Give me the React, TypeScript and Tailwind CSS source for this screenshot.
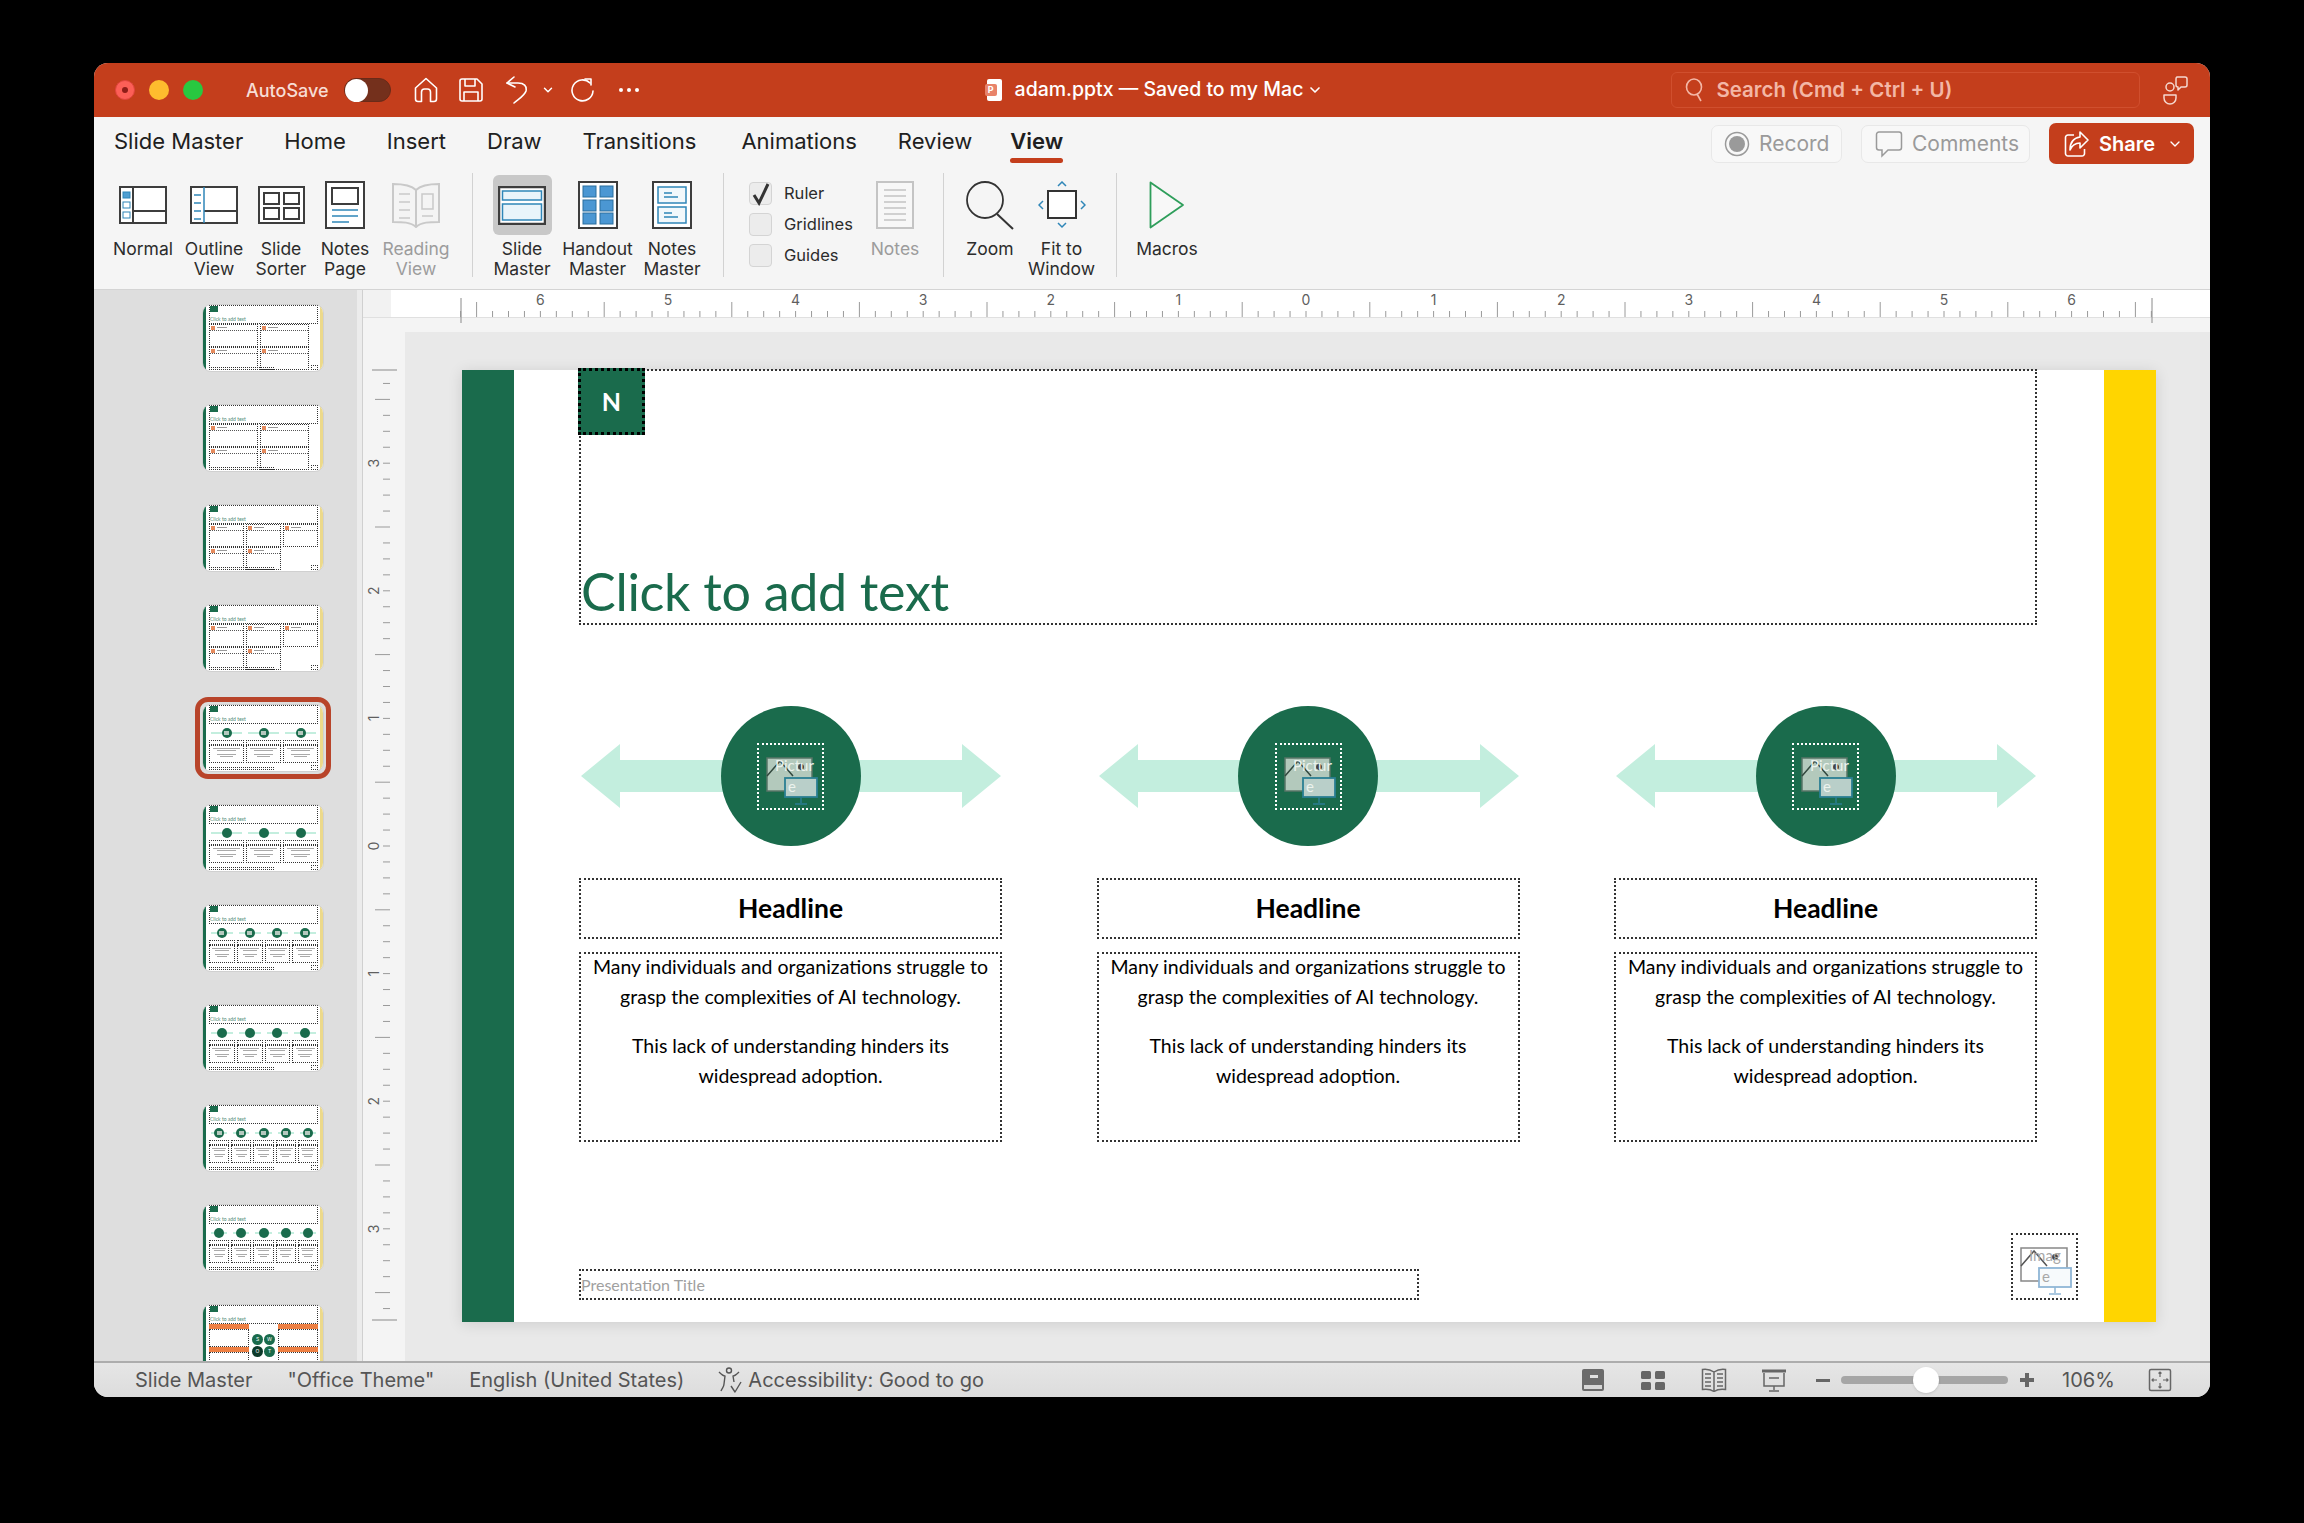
import React from 'react';
import { ChevronDown } from 'lucide-react';

const GREEN = '#1a6b4c';
const ui = "font-['Inter','Liberation_Sans',sans-serif]";
const deck = "font-['Lato','Open_Sans',sans-serif]";

function HomeIcon() {
  return (
    <svg width="24" height="26" viewBox="0 0 24 26" fill="none" stroke="#fff" strokeWidth="1.6" strokeLinejoin="round">
      <path d="M1.5 11 12 1.5 22.5 11v11a2.5 2.5 0 0 1-2.5 2.5h-3.5V15a3 3 0 0 0-3-3h-3a3 3 0 0 0-3 3v9.500H4A2.500 2.500 0 0 1 1.500 22z" />
    </svg>
  );
}

function SaveIcon() {
  return (
    <svg width="24" height="24" viewBox="0 0 24 24" fill="none" stroke="#fff" strokeWidth="1.6" strokeLinejoin="round">
      <path d="M3 1h15l5 5v15a2 2 0 0 1-2 2H3a2 2 0 0 1-2-2V3a2 2 0 0 1 2-2z" />
      <path d="M6 1v7h10V1M5 23v-9h14v9" />
    </svg>
  );
}

function UndoIcon() {
  return (
    <svg width="24" height="28" viewBox="0 0 24 28" fill="none" stroke="#fff" strokeWidth="1.6" strokeLinecap="round" strokeLinejoin="round">
      <path d="M9 1 2 7l8 4" />
      <path d="M2 7h11c6 0 9 3 8 8-1 4-6 7-12 12" />
    </svg>
  );
}

function RedoIcon() {
  return (
    <svg width="24" height="24" viewBox="0 0 24 24" fill="none" stroke="#fff" strokeWidth="1.6" strokeLinecap="round" strokeLinejoin="round">
      <path d="M19 5A10.500 10.500 0 1 0 22 13" />
      <path d="M14 1h6v6" />
    </svg>
  );
}

function CollabIcon() {
  return (
    <svg width="26" height="30" viewBox="0 0 26 30" fill="none" stroke="#f5d8cf" strokeWidth="1.5" strokeLinejoin="round">
      <path d="M15 2h8a2 2 0 0 1 2 2v6a2 2 0 0 1-2 2h-4l-3 3v-3a2 2 0 0 1-2-2V4a2 2 0 0 1 1-2z" />
      <circle cx="8" cy="12" r="4" />
      <path d="M2 20h12v3a6 6 0 0 1-12 0z" />
    </svg>
  );
}

function IconBtn({ w, label, disabled, icon }: { w: string; label: string[]; disabled?: boolean; icon: React.ReactNode }) {
  return (
    <div className={`${w} flex flex-col items-center`}>
      <div className="h-[61px] pt-[3px] w-full flex items-center justify-center">{icon}</div>
      <div className={`mt-[5px] text-center text-[17.5px] leading-[20px] whitespace-nowrap ${disabled ? 'text-[#9c9c9c]' : 'text-[#2c2c2c]'}`}>
        {label.map((l) => (
          <div key={l}>{l}</div>
        ))}
      </div>
    </div>
  );
}

const dark = '#3d3d3d';
const blue = '#2f86b8';

function NormalIcon() {
  return (
    <svg width="48" height="38" viewBox="0 0 48 38" fill="none">
      <rect x="1" y="1" width="46" height="36" fill="#fff" stroke={dark} strokeWidth="2" />
      <path d="M14 1v36M14 25h33" stroke={dark} strokeWidth="2" />
      <rect x="4" y="6" width="7" height="6" fill="#4f9fd2" stroke={blue} />
      <rect x="4" y="16" width="7" height="6" fill="#fff" stroke={blue} />
      <rect x="4" y="26" width="7" height="6" fill="#fff" stroke={blue} />
    </svg>
  );
}

function OutlineIcon() {
  return (
    <svg width="48" height="38" viewBox="0 0 48 38" fill="none">
      <rect x="1" y="1" width="46" height="36" fill="#fff" stroke={dark} strokeWidth="2" />
      <path d="M14 25h33" stroke={dark} strokeWidth="2" />
      <path d="M14 1v36" stroke={blue} strokeWidth="1.500" />
      <path d="M4 9h7M4 17h7M4 25h7M4 33h7" stroke={blue} strokeWidth="1.500" />
    </svg>
  );
}

function SorterIcon() {
  return (
    <svg width="47" height="38" viewBox="0 0 47 38" fill="none" stroke={dark} strokeWidth="2">
      <rect x="1" y="1" width="45" height="36" fill="#fff" />
      <rect x="6" y="7" width="15" height="11" />
      <rect x="26" y="7" width="15" height="11" />
      <rect x="6" y="22" width="15" height="11" />
      <rect x="26" y="22" width="15" height="11" />
    </svg>
  );
}

function NotesPageIcon() {
  return (
    <svg width="40" height="48" viewBox="0 0 40 48" fill="none">
      <rect x="1" y="1" width="38" height="46" fill="#fff" stroke={dark} strokeWidth="2" />
      <rect x="7" y="7" width="26" height="16" stroke={dark} strokeWidth="2" />
      <path d="M7 29h26M7 35h26M7 41h17" stroke={blue} strokeWidth="1.500" />
    </svg>
  );
}

function ReadingIcon() {
  return (
    <svg width="50" height="46" viewBox="0 0 50 46" fill="none" stroke="#c9c9c9" strokeWidth="2">
      <path d="M25 8C20 3 10 2 2 2v38c9 0 18 0 23 5 5-5 14-5 23-5V2c-8 0-18 1-23 6z" fill="#f4f4f4" />
      <path d="M25 8v36" />
      <path d="M8 12h11M8 20h11M8 28h11M8 36h11M31 34h11" strokeWidth="1.500" />
      <rect x="31" y="12" width="11" height="15" strokeWidth="1.500" />
    </svg>
  );
}

function MasterIcon() {
  return (
    <svg width="48" height="39" viewBox="0 0 48 39" fill="none">
      <rect x="1" y="1" width="46" height="37" fill="#fff" stroke={dark} strokeWidth="2.500" />
      <rect x="4.500" y="5" width="39" height="9" fill="#e9f4fa" stroke={blue} strokeWidth="1.500" />
      <rect x="4.500" y="18" width="39" height="16" fill="#e9f4fa" stroke={blue} strokeWidth="1.500" />
    </svg>
  );
}

function HandoutIcon() {
  const cells = [5, 19, 32];
  return (
    <svg width="40" height="48" viewBox="0 0 40 48" fill="none">
      <rect x="1" y="1" width="38" height="46" fill="#fff" stroke={dark} strokeWidth="2" />
      {cells.map((y) => (
        <g key={y} fill="#4b97d3" stroke="#2b6e9e">
          <rect x="5" y={y} width="13" height="11" />
          <rect x="22" y={y} width="13" height="11" />
        </g>
      ))}
    </svg>
  );
}

function NotesMasterIcon() {
  return (
    <svg width="40" height="48" viewBox="0 0 40 48" fill="none">
      <rect x="1" y="1" width="38" height="46" fill="#fff" stroke={dark} strokeWidth="2" />
      <rect x="6" y="6" width="28" height="16" fill="#f2f8fb" stroke={blue} strokeWidth="1.500" />
      <rect x="6" y="26" width="28" height="16" fill="#f2f8fb" stroke={blue} strokeWidth="1.500" />
      <path d="M12 12h8M12 16h14M12 32h8M12 36h14" stroke={blue} strokeWidth="1.500" />
    </svg>
  );
}

function NotesIcon() {
  return (
    <svg width="38" height="48" viewBox="0 0 38 48" fill="none">
      <rect x="1" y="1" width="36" height="46" fill="#f7f7f7" stroke="#c4c4c4" strokeWidth="2" />
      <path d="M8 9h22M8 15h22M8 21h22M8 27h22M8 33h22M8 39h22" stroke="#c4c4c4" strokeWidth="1.500" />
    </svg>
  );
}

function ZoomIcon() {
  return (
    <svg width="48" height="50" viewBox="0 0 48 50" fill="none" stroke="#333" strokeWidth="1.800">
      <circle cx="19" cy="20" r="18" />
      <path d="M31 34 47 49" strokeWidth="2" />
    </svg>
  );
}

function FitIcon() {
  return (
    <svg width="48" height="48" viewBox="0 0 48 48" fill="none">
      <rect x="10" y="10" width="28" height="27" fill="#fff" stroke="#333" strokeWidth="2" />
      <path d="M20 5l4-4 4 4M20 42l4 4 4-4M5 20l-4 4 4 4M43 20l4 4-4 4" stroke={blue} strokeWidth="1.500" />
    </svg>
  );
}

function MacrosIcon() {
  return (
    <svg width="36" height="48" viewBox="0 0 36 48" fill="none">
      <path d="M1.500 1.500 34 24 1.500 46.500z" fill="#f8f8f8" stroke="#2f9e5b" strokeWidth="1.800" strokeLinejoin="round" />
    </svg>
  );
}

function Check({ label, on }: { label: string; on?: boolean }) {
  return (
    <div className="flex items-center gap-[12px] h-[31px]">
      <div className="w-[23px] h-[23px] rounded-[4px] border border-[#d4d4d4] bg-[#ececec] flex items-center justify-center">
        {on && (
          <svg width="20" height="24" viewBox="0 0 20 24" fill="none">
            <path d="M3 13l5 8L17 2" stroke="#333" strokeWidth="3" />
          </svg>
        )}
      </div>
      <span className="text-[16.5px] text-[#2c2c2c]">{label}</span>
    </div>
  );
}

function Sep({ m }: { m: string }) {
  return <div className={`w-px h-[104px] bg-[#d2d2d2] ${m}`} />;
}

function HRuler() {
  const ticks = Array.from({ length: 107 }, (_, i) => i - 53);
  return (
    <svg width="1819" height="34" className="overflow-visible block" fill="none">
      {ticks.map((k) => {
        const x = 1306 - 391 + k * 15.95;
        const long = k % 4 === 0 && k % 8 !== 0;
        return <line key={k} x1={x} x2={x} y1={long ? 12 : 21} y2={27} stroke="#9a9a9a" />;
      })}
      <line x1={461 - 391} x2={461 - 391} y1={8} y2={33} stroke="#8a8a8a" />
      <line x1={2152 - 391} x2={2152 - 391} y1={8} y2={33} stroke="#8a8a8a" />
      {[-6, -5, -4, -3, -2, -1, 0, 1, 2, 3, 4, 5, 6].map((n) => (
        <text key={n} x={1306 - 391 + n * 127.6} y={15} textAnchor="middle" fontSize="14" fill="#5f5f5f" fontFamily="Inter">
          {Math.abs(n)}
        </text>
      ))}
    </svg>
  );
}

function VRuler() {
  const ticks = Array.from({ length: 59 }, (_, i) => i - 29);
  return (
    <svg width="28" height="1043" className="overflow-visible block shrink-0" fill="none">
      {ticks.map((k) => {
        const y = 846 - 318 + k * 15.95;
        const long = k % 4 === 0 && k % 8 !== 0;
        return <line key={k} y1={y} y2={y} x1={long ? 12 : 20} x2={27} stroke="#9a9a9a" />;
      })}
      <line y1={52} y2={52} x1={9} x2={34} stroke="#8a8a8a" />
      <line y1={1002} y2={1002} x1={9} x2={34} stroke="#8a8a8a" />
      {[-3, -2, -1, 0, 1, 2, 3].map((n) => (
        <text
          key={n}
          transform={`translate(16 ${846 - 318 + n * 127.6}) rotate(-90)`}
          textAnchor="middle"
          fontSize="14"
          fill="#5f5f5f"
          fontFamily="Inter"
        >
          {Math.abs(n)}
        </text>
      ))}
    </svg>
  );
}

function MiniBox({ className }: { className?: string }) {
  return <div className={`border border-dotted border-[#333] ${className ?? ''}`} />;
}

function ThumbColumns({ n, pic }: { n: number; pic?: boolean }) {
  const cols = Array.from({ length: n }, (_, i) => i);
  return (
    <div className="flex gap-[2px] mt-[3px]">
      {cols.map((i) => (
        <div key={i} className="flex-1 flex flex-col min-w-0">
          <div className="relative h-[12px] flex items-center justify-center">
            <div className="absolute inset-x-[2px] h-[2px] bg-[#c3eede]" />
            <div className="relative w-[10px] h-[10px] rounded-full bg-[#1a6b4c] flex items-center justify-center">
              {pic && <div className="w-[5px] h-[4px] bg-[#b6c9bf]" />}
            </div>
          </div>
          <MiniBox className="h-[5px] mt-[1px]" />
          <div className="border border-dotted border-[#333] h-[18px] flex flex-col items-center gap-[1px] pt-[2px]">
            <div className="w-4/5 h-px bg-[#aaa]" />
            <div className="w-3/5 h-px bg-[#aaa]" />
            <div className="w-3/5 h-px bg-[#aaa] mt-[2px]" />
            <div className="w-2/5 h-px bg-[#aaa]" />
          </div>
        </div>
      ))}
    </div>
  );
}

function GridCell({ w }: { w: string }) {
  return (
    <div className={`${w} h-[23px] border border-dotted border-[#333] relative`}>
      <div className="absolute left-[1px] top-[1px] w-[4px] h-[4px] bg-[#e58a5c]" />
      <div className="absolute left-[7px] top-[2px] w-[10px] h-px bg-[#999]" />
      <div className="absolute inset-x-0 top-[5px] border-t border-dotted border-[#555]" />
    </div>
  );
}

function ThumbGrid({ n }: { n: 2 | 3 }) {
  const w = n === 2 ? 'w-[49px]' : 'w-[35px]';
  const top = n === 2 ? [0, 1] : [0, 1, 2];
  const bottom = [0, 1];
  return (
    <div className="flex flex-col">
      <div className="flex gap-[2px]">
        {top.map((i) => (
          <GridCell key={i} w={w} />
        ))}
      </div>
      <div className="flex gap-[2px]">
        {bottom.map((i) => (
          <GridCell key={i} w={w} />
        ))}
      </div>
    </div>
  );
}

function ThumbSwot() {
  return (
    <div className="relative flex justify-between h-[50px]">
      {[0, 1].map((i) => (
        <div key={i} className="w-[40px] flex flex-col">
          <div className="h-[5px] bg-[#ee8043]" />
          <MiniBox className="h-[18px]" />
          <div className="h-[5px] bg-[#ee8043]" />
          <MiniBox className="h-[18px]" />
        </div>
      ))}
      <div className="absolute left-[43px] top-[10px] w-[23px] grid grid-cols-2 gap-px text-[5px] text-white text-center leading-[11px]">
        <div className="h-[11px] rounded-full bg-[#1a6b4c]">S</div>
        <div className="h-[11px] rounded-full bg-[#1a6b4c]">W</div>
        <div className="h-[11px] rounded-full bg-[#0d3a2a]">O</div>
        <div className="h-[11px] rounded-full bg-[#1a6b4c]">T</div>
      </div>
    </div>
  );
}

function Thumb({ selected, children, swot }: { selected?: boolean; children: React.ReactNode; swot?: boolean }) {
  return (
    <div className="relative w-[122px] h-[68px] shrink-0">
      <div className="w-full h-full rounded-[9px] bg-white border border-[#d0d0d0] overflow-hidden flex">
        <div className="w-[3px] bg-[#1a6b4c] shrink-0" />
        <div className="flex-1 min-w-0 pl-[3px] pr-[2px] flex flex-col">
          <div className={`relative h-[19px] shrink-0 border border-dotted border-[#333] flex items-end ${deck}`}>
            <div className="absolute left-0 top-0 w-[8px] h-[6px] bg-[#1a6b4c]" />
            <span className="text-[5px] leading-[7px] text-[#4f8b75] whitespace-nowrap">Click to add text</span>
          </div>
          <div className="flex-1 min-h-0">{children}</div>
          {!swot && (
            <div className="flex items-end justify-between shrink-0 mb-[1px]">
              <MiniBox className="w-[65px] h-[3px]" />
              <MiniBox className="w-[7px] h-[5px]" />
            </div>
          )}
        </div>
        <div className="w-[3px] bg-[#ecd98a] shrink-0" />
      </div>
      {selected && <div className="absolute -inset-[7px] rounded-[13px] border-[5px] border-[#b8442a]" />}
    </div>
  );
}

function SlideIcon({ main }: { main?: boolean }) {
  const txt = main ? 'Pictur' : 'Imag';
  return (
    <svg width="63" height="63" viewBox="0 0 63 63" fill="none">
      {main ? (
        <rect x="8" y="13" width="45" height="33" fill="#b3c9bc" stroke="#587567" strokeWidth="1.500" />
      ) : (
        <path d="M8 31V13h46v23M8 31v15h20" stroke="#888" strokeWidth="1.500" />
      )}
      <path d="M8 31l13-15 13 15" stroke={main ? '#33493f' : '#555'} strokeWidth="1.500" />
      <circle cx="42" cy="22" r="3" fill="#444" />
      <text x="16" y="26" fontSize="15" fill={main ? '#ecf3ee' : '#a8a8a8'} fontFamily="Lato">
        {txt}
      </text>
      <rect x="26" y="33" width="32" height="19" fill={main ? '#b9cfc9' : '#f7fafc'} stroke={main ? '#2b7f93' : '#8fb6d6'} strokeWidth="1.800" />
      <path d="M42 52v6M36 59h12" stroke={main ? '#2b7f93' : '#8fb6d6'} strokeWidth="1.500" />
      <text x="29" y="47" fontSize="15" fill={main ? '#ecf3ee' : '#a8a8a8'} fontFamily="Lato">
        e
      </text>
    </svg>
  );
}

function Column() {
  return (
    <div className="w-[423px] flex flex-col">
      <div className="relative h-[140px] flex items-center justify-center">
        <svg width="420" height="64" viewBox="0 0 420 64" className="absolute left-[2px] top-[38px]">
          <path d="M0 32 39 0v16h342V0l39 32-39 32V48H39v16z" fill="#c3eede" />
        </svg>
        <div className="relative w-[140px] h-[140px] rounded-full bg-[#1a6b4c] flex items-center justify-center">
          <div className="w-[67px] h-[67px] border-2 border-dotted border-white flex items-center justify-center">
            <SlideIcon main />
          </div>
        </div>
      </div>
      <div className="mt-[32px] h-[61px] border-2 border-dotted border-[#333] flex items-center justify-center text-[26.5px] font-bold text-black">
        Headline
      </div>
      <div className="mt-[13px] h-[190px] border-2 border-dotted border-[#333] text-center text-black text-[19.5px] leading-[30px]">
        <p className="-mt-[2px]">Many individuals and organizations struggle to</p>
        <p>grasp the complexities of AI technology.</p>
        <p className="mt-[19px]">This lack of understanding hinders its</p>
        <p>widespread adoption.</p>
      </div>
    </div>
  );
}

function SbIcon({ children, w = 24 }: { children: React.ReactNode; w?: number }) {
  return (
    <svg width={w} height="24" viewBox={`0 0 ${w} 24`} fill="none">
      {children}
    </svg>
  );
}

export default function App() {
  return (
    <div className={`w-full h-[1523px] bg-black pl-[94px] pt-[63px] overflow-hidden ${ui}`}>
      <div className="w-[2116px] h-[1334px] rounded-[14px] overflow-hidden flex flex-col bg-[#f5f5f5]">
        {/* title bar */}
        <div className="h-[54px] shrink-0 bg-[#c43e1c] flex items-center text-white">
          <div className="flex items-center gap-[14px] ml-[21px]">
            <div className="w-[20px] h-[20px] rounded-full bg-[#fc5f57] flex items-center justify-center border border-[#e0443e]">
              <div className="w-[6px] h-[6px] rounded-full bg-[#8f1d18]" />
            </div>
            <div className="w-[20px] h-[20px] rounded-full bg-[#febc2e]" />
            <div className="w-[20px] h-[20px] rounded-full bg-[#28c840]" />
          </div>
          <span className="ml-[43px] text-[18px] font-medium text-[#f7ddd5]">AutoSave</span>
          <div className="ml-[15px] w-[47px] h-[24px] rounded-full bg-[#74301c] flex items-center border border-[#6a2a18]">
            <div className="w-[23px] h-[23px] rounded-full bg-white" />
          </div>
          <div className="ml-[23px]">
            <HomeIcon />
          </div>
          <div className="ml-[21px]">
            <SaveIcon />
          </div>
          <div className="ml-[22px]">
            <UndoIcon />
          </div>
          <ChevronDown size={14} strokeWidth={2.5} className="ml-[12px]" />
          <div className="ml-[16px]">
            <RedoIcon />
          </div>
          <div className="ml-[24px] flex gap-[4px]">
            <div className="w-[4px] h-[4px] rounded-full bg-white" />
            <div className="w-[4px] h-[4px] rounded-full bg-white" />
            <div className="w-[4px] h-[4px] rounded-full bg-white" />
          </div>
          <div className="ml-[348px] w-[15px] h-[22px] rounded-[2px] bg-white relative">
            <div className="absolute -left-[2px] top-[5px] w-[12px] h-[12px] rounded-[2px] bg-[#e8836a] text-[9px] leading-[12px] text-center font-bold text-white">
              P
            </div>
          </div>
          <span className="ml-[13px] text-[19.5px] font-medium whitespace-nowrap">adam.pptx — Saved to my Mac</span>
          <ChevronDown size={16} strokeWidth={2.5} className="ml-[4px]" />
          <div className="ml-[348px] w-[469px] h-[36px] rounded-[6px] border border-[#d04f2e] flex items-center pl-[12px]">
            <svg width="20" height="24" viewBox="0 0 20 24" fill="none" stroke="#f3b7a6" strokeWidth="1.600">
              <ellipse cx="10" cy="9" rx="7.500" ry="8" />
              <path d="M13 16l4 7" />
            </svg>
            <span className="ml-[12px] text-[20.5px] font-semibold text-[#f3b7a6] whitespace-nowrap">Search (Cmd + Ctrl + U)</span>
          </div>
          <div className="ml-[22px]">
            <CollabIcon />
          </div>
        </div>

        {/* tabs */}
        <div className="h-[56px] shrink-0 flex items-start">
          <div className="ml-[20px] mt-[8px] flex gap-[41px] text-[22px] text-[#202020]">
            <span>Slide Master</span>
            <span>Home</span>
            <span>Insert</span>
            <span>Draw</span>
            <span className="mr-[4px]">Transitions</span>
            <span>Animations</span>
            <span className="-mr-[3px]">Review</span>
            <span className="relative font-semibold">
              View
              <span className="absolute left-0 right-0 top-[33px] h-[5px] rounded-full bg-[#c43e1c]" />
            </span>
          </div>
          <div className="ml-auto mr-[16px] mt-[6px] flex items-center gap-[19px]">
            <div className="h-[38px] w-[131px] rounded-[7px] border border-[#e8e8e8] bg-[#f8f8f8] flex items-center pl-[12px] text-[21px] text-[#9a9a9a]">
              <svg width="26" height="26" viewBox="0 0 26 26" className="mr-[9px]" fill="none">
                <circle cx="13" cy="13" r="11.500" stroke="#9a9a9a" strokeWidth="1.500" />
                <circle cx="13" cy="13" r="8" fill="#9a9a9a" />
              </svg>
              Record
            </div>
            <div className="h-[38px] w-[169px] rounded-[7px] border border-[#e8e8e8] bg-[#f8f8f8] flex items-center pl-[13px] text-[21px] text-[#9a9a9a]">
              <svg width="28" height="28" viewBox="0 0 28 28" className="mr-[9px]" fill="none" stroke="#9a9a9a" strokeWidth="1.500">
                <path d="M4 2h20a2.500 2.500 0 0 1 2.500 2.500v13A2.500 2.500 0 0 1 24 20H13l-6 6v-6H4a2.500 2.500 0 0 1-2.500-2.500v-13A2.500 2.500 0 0 1 4 2z" />
              </svg>
              Comments
            </div>
            <div className="h-[41px] w-[145px] rounded-[7px] bg-[#c43e1c] flex items-center pl-[15px] text-[20px] font-semibold text-white">
              <svg width="26" height="28" viewBox="0 0 26 28" className="mr-[9px]" fill="none" stroke="#fff" strokeWidth="1.600" strokeLinejoin="round">
                <path d="M10 5H4a2.500 2.500 0 0 0-2.500 2.500v16A2.500 2.500 0 0 0 4 26h14a2.500 2.500 0 0 0 2.500-2.500V19" />
                <path d="M16 2l8 8-8 8v-5c-5 0-8 2-10 7 0-7 3-12 10-13z" />
              </svg>
              Share
              <ChevronDown size={16} strokeWidth={2} className="ml-[12px]" />
            </div>
          </div>
        </div>

        {/* ribbon */}
        <div className="h-[117px] shrink-0 border-b border-[#d4d4d4] flex items-start pl-[14px]">
          <IconBtn w="w-[70px]" label={['Normal']} icon={<NormalIcon />} />
          <IconBtn w="w-[72px]" label={['Outline', 'View']} icon={<OutlineIcon />} />
          <IconBtn w="w-[62px]" label={['Slide', 'Sorter']} icon={<SorterIcon />} />
          <IconBtn w="w-[66px]" label={['Notes', 'Page']} icon={<NotesPageIcon />} />
          <IconBtn w="w-[76px]" label={['Reading', 'View']} disabled icon={<ReadingIcon />} />
          <Sep m="ml-[18px] mr-[12px]" />
          <div className="relative w-[74px] flex flex-col items-center">
            <div className="w-[59px] h-[60px] mt-[2px] rounded-[6px] bg-[#c8c8c8] flex items-center justify-center">
              <MasterIcon />
            </div>
            <div className="mt-[4px] text-center text-[17.5px] leading-[20px] text-[#2c2c2c]">
              <div>Slide</div>
              <div>Master</div>
            </div>
          </div>
          <IconBtn w="w-[77px]" label={['Handout', 'Master']} icon={<HandoutIcon />} />
          <IconBtn w="w-[72px]" label={['Notes', 'Master']} icon={<NotesMasterIcon />} />
          <Sep m="ml-[15px] mr-[25px]" />
          <div className="flex flex-col pt-[5px] w-[114px]">
            <Check label="Ruler" on />
            <Check label="Gridlines" />
            <Check label="Guides" />
          </div>
          <IconBtn w="w-[64px]" label={['Notes']} disabled icon={<NotesIcon />} />
          <Sep m="ml-[16px] mr-[14px]" />
          <IconBtn w="w-[64px]" label={['Zoom']} icon={<ZoomIcon />} />
          <IconBtn w="w-[79px]" label={['Fit to', 'Window']} icon={<FitIcon />} />
          <Sep m="ml-[15px] mr-[10px]" />
          <IconBtn w="w-[80px]" label={['Macros']} icon={<MacrosIcon />} />
        </div>

        {/* workspace */}
        <div className="flex-1 min-h-0 flex">
          <div className="w-[263px] shrink-0 bg-[#dedede] overflow-hidden pl-[108px] pt-[14px] flex flex-col gap-[32px]">
            <Thumb><ThumbGrid n={2} /></Thumb>
            <Thumb><ThumbGrid n={2} /></Thumb>
            <Thumb><ThumbGrid n={3} /></Thumb>
            <Thumb><ThumbGrid n={3} /></Thumb>
            <Thumb selected><ThumbColumns n={3} pic /></Thumb>
            <Thumb><ThumbColumns n={3} /></Thumb>
            <Thumb><ThumbColumns n={4} pic /></Thumb>
            <Thumb><ThumbColumns n={4} /></Thumb>
            <Thumb><ThumbColumns n={5} pic /></Thumb>
            <Thumb><ThumbColumns n={5} /></Thumb>
            <Thumb swot><ThumbSwot /></Thumb>
          </div>
          <div className="w-[6px] shrink-0 bg-[#ececec] border-r border-[#d0d0d0]" />
          <div className="flex-1 min-w-0 flex flex-col bg-[#f4f4f4]">
            <div className="h-[28px] shrink-0 flex border-b border-[#e0e0e0]">
              <div className="w-[28px] shrink-0 bg-[#f2f2f2]" />
              <div className="flex-1 bg-white">
                <HRuler />
              </div>
            </div>
            <div className="flex-1 min-h-0 flex">
              <VRuler />
              <div className="flex-1 min-w-0 pl-[14px] pt-[14px]">
                <div className="h-full bg-[#e9e9e9] pl-[57px] pt-[38px]">
                  <div className={`w-[1694px] h-[952px] bg-white flex shadow-[0_2px_14px_rgba(0,0,0,0.12)] ${deck}`}>
                    <div className="w-[52px] shrink-0 bg-[#1a6b4c]" />
                    <div className="flex-1 min-w-0 pl-[65px] pr-[67px] flex flex-col">
                      <div className="relative h-[256px] shrink-0 -mt-px border-2 border-dotted border-[#333] flex items-end pb-[1px]">
                        <div
                          className="absolute -left-[3px] -top-[3px] w-[67px] h-[67px] border-[3px] border-dotted border-black flex items-center justify-center text-white text-[25px] font-bold"
                          style={{ backgroundColor: GREEN }}
                        >
                          N
                        </div>
                        <span className="text-[52px] leading-[62px] tracking-[-0.3px] text-[#1a6b4c]">Click to add text</span>
                      </div>
                      <div className="mt-[81px] flex justify-between shrink-0">
                        <Column />
                        <Column />
                        <Column />
                      </div>
                      <div className="mt-[91px] -mr-[41px] flex items-end justify-between shrink-0">
                        <div className="w-[840px] h-[31px] border-2 border-dotted border-[#333] flex items-center text-[16px] text-[#a0a0a0]">
                          Presentation Title
                        </div>
                        <div className="w-[67px] h-[67px] border-2 border-dotted border-[#333] flex items-center justify-center">
                          <SlideIcon />
                        </div>
                      </div>
                    </div>
                    <div className="w-[52px] shrink-0 bg-[#ffd500]" />
                  </div>
                </div>
              </div>
            </div>
          </div>
        </div>

        {/* status bar */}
        <div className="h-[36px] shrink-0 border-t-2 border-[#adadad] bg-linear-to-b from-[#e6e6e6] to-[#dcdcdc] flex items-center text-[20px] text-[#555] whitespace-nowrap">
          <span className="ml-[41px]">Slide Master</span>
          <span className="ml-[35px]">"Office Theme"</span>
          <span className="ml-[35px]">English (United States)</span>
          <svg width="28" height="28" viewBox="0 0 28 28" className="ml-[33px]" fill="none" stroke="#555" strokeWidth="1.400" strokeLinejoin="round">
            <circle cx="12" cy="4.500" r="2.500" />
            <path d="M2 6c3 3 5 4 6 4l-1 8c0 3-2 4-3 7M22 6c-3 3-5 4-6 4l1 6" />
            <path d="M14 20l4 6 6-10" />
          </svg>
          <span className="ml-[3px]">Accessibility: Good to go</span>

          <div className="ml-auto flex items-center">
            <SbIcon>
              <rect x="1" y="1" width="22" height="22" rx="2" fill="#6b6b6b" />
              <rect x="9" y="7" width="8" height="3" fill="#e0e0e0" />
              <rect x="3" y="17" width="18" height="4" fill="#d6d6d6" />
            </SbIcon>
            <div className="ml-[35px]">
              <SbIcon w={26}>
                <rect x="1" y="3" width="10" height="8" rx="1.500" fill="#666" />
                <rect x="15" y="3" width="10" height="8" rx="1.500" fill="#666" />
                <rect x="1" y="14" width="10" height="8" rx="1.500" fill="#666" />
                <rect x="15" y="14" width="10" height="8" rx="1.500" fill="#666" />
              </SbIcon>
            </div>
            <div className="ml-[35px]">
              <SbIcon w={26}>
                <path d="M13 4C10 2 5 1 1.500 1.500v20C5 21 10 21.500 13 23.500c3-2 8-2.500 11.500-2v-20C21 1 16 2 13 4zM13 4v19" stroke="#666" strokeWidth="1.500" />
                <path d="M4 6h6M4 10h6M4 14h6M4 18h6M16 6h6M16 10h6M16 14h6M16 18h6" stroke="#666" strokeWidth="1.500" />
              </SbIcon>
            </div>
            <div className="ml-[34px]">
              <SbIcon w={26}>
                <path d="M1 3h24" stroke="#666" strokeWidth="3" />
                <path d="M3 5v13h20V5M13 18v4M8 23h10M8 10h10" stroke="#666" strokeWidth="1.500" />
              </SbIcon>
            </div>
            <div className="ml-[29px] w-[14px] h-[3px] bg-[#666]" />
            <div className="ml-[11px] relative w-[167px] h-[8px] rounded-full bg-[#a6a6a6] flex items-center">
              <div className="absolute left-[72px] w-[26px] h-[26px] rounded-full bg-white shadow-sm" />
            </div>
            <div className="ml-[12px] relative w-[14px] h-[14px]">
              <div className="absolute inset-x-0 top-[5px] h-[4px] bg-[#666]" />
              <div className="absolute inset-y-0 left-[5px] w-[4px] bg-[#666]" />
            </div>
            <span className="ml-[28px] text-[#555] w-[54px]">106%</span>
            <div className="ml-[32px] mr-[38px]">
              <SbIcon>
                <rect x="1.500" y="1.500" width="21" height="21" rx="1.500" stroke="#666" strokeWidth="1.500" />
                <path d="M12 4v5M12 15v5M4 12h5M15 12h5M10.500 5.500 12 4l1.500 1.500M10.500 18.500 12 20l1.500-1.500M5.500 10.500 4 12l1.500 1.500M18.500 10.500 20 12l-1.500 1.500" stroke="#666" strokeWidth="1.200" />
              </SbIcon>
            </div>
          </div>
        </div>
      </div>
    </div>
  );
}
